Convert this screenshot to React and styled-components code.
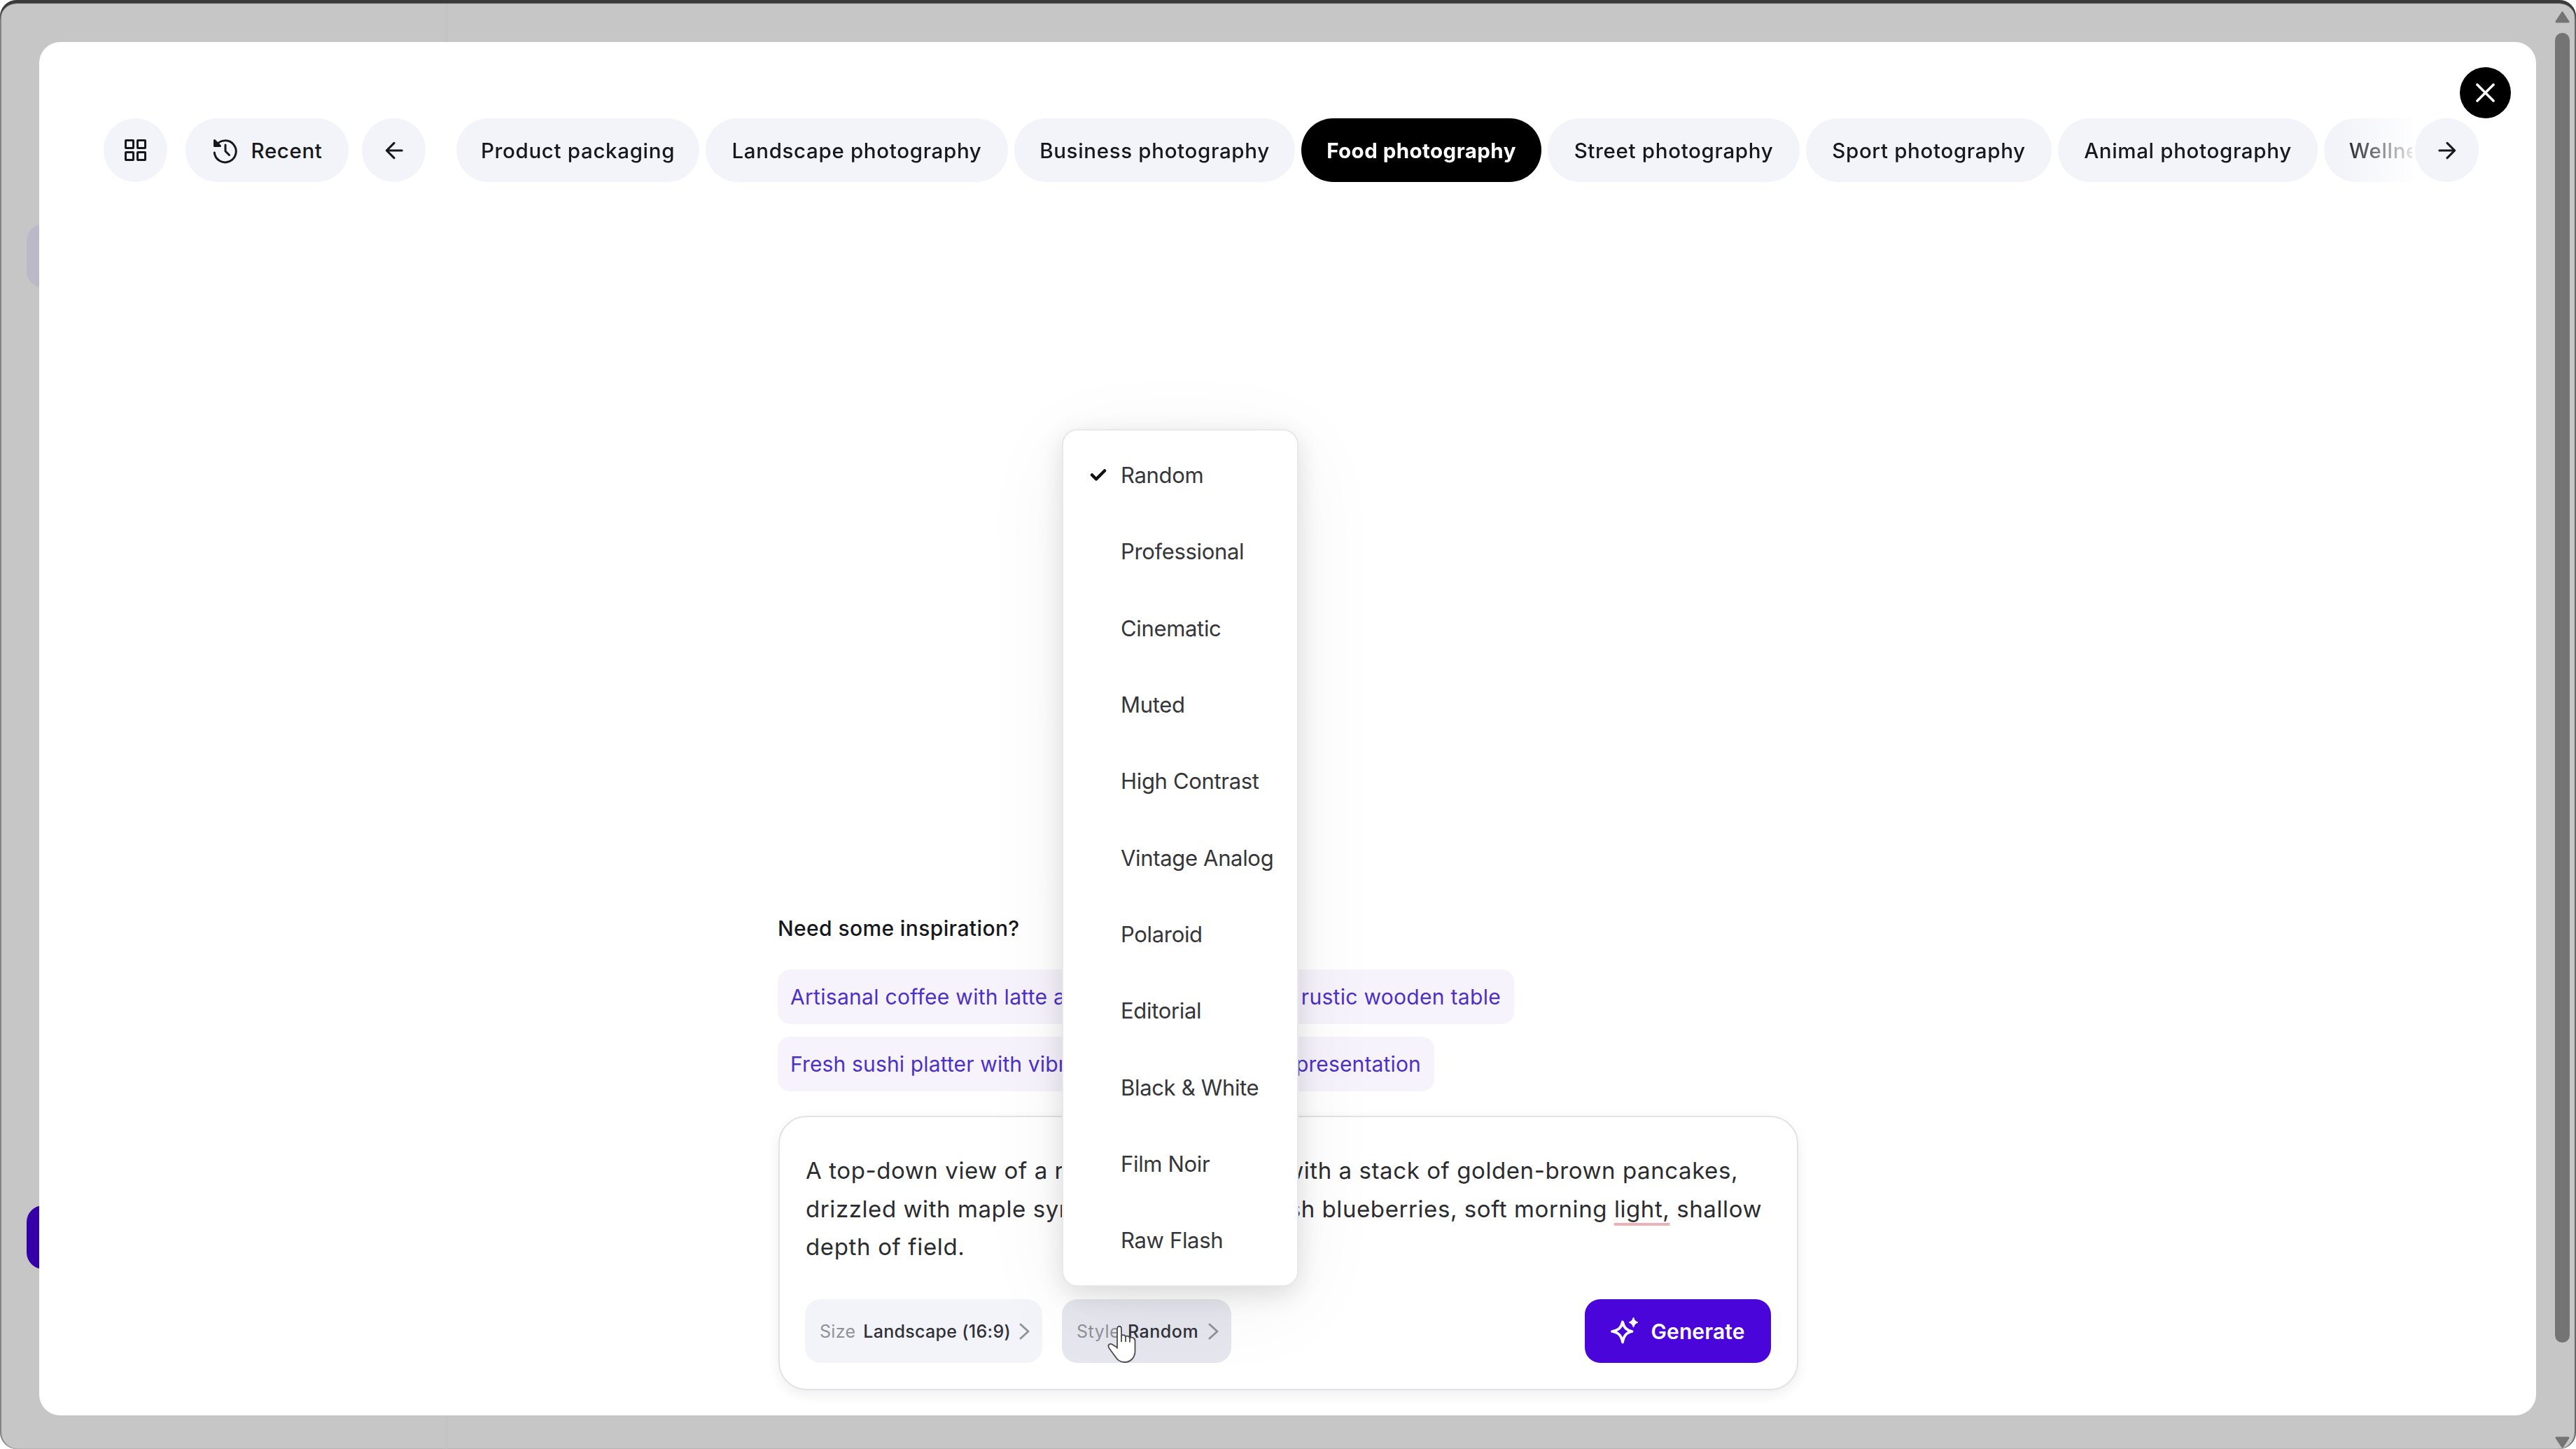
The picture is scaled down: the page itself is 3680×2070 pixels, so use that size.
import React from "react";
import styled, { createGlobalStyle, css } from "styled-components";

const GlobalStyle = createGlobalStyle`
  *, *::before, *::after { box-sizing: border-box; }
  html, body { margin: 0; padding: 0; background: #fff; }
  body { font-family: Inter, "Liberation Sans", sans-serif; color: #17181c; overflow: hidden; }
  button { font: inherit; color: inherit; border: 0; margin: 0; padding: 0; }
`;

const Window = styled.div`
  position: relative;
  display: flex;
  width: 3680px;
  height: 2070px;
  overflow: hidden;
  border-radius: 24px;
  background: #c6c6c6;
  box-shadow: inset 0 5px 1px #3a3a3a, inset 2px 0 1px #858585, inset -2px 0 1px #666;
`;

const Stage = styled.div`
  flex: 1;
  min-width: 0;
  display: flex;
  padding: 60px 27px 48px 56px;
`;

const SidebarEdge = styled.div`
  position: absolute;
  left: 637px;
  top: 6px;
  bottom: 0;
  width: 2px;
  background: #c2c2c2;
`;

const PageTab = styled.div`
  position: absolute;
  left: 38px;
  top: ${(p) => p.$top}px;
  width: 60px;
  height: 91px;
  border-radius: 24px;
  background: ${(p) => p.$color};
`;

const Modal = styled.main`
  position: relative;
  flex: 1;
  min-width: 0;
  display: flex;
  flex-direction: column;
  justify-content: space-between;
  border-radius: 30px;
  background: #fff;
  padding: 109px 82px 36px 92px;
`;

const ScrollTrack = styled.div`
  width: 30px;
  flex: none;
  display: flex;
  flex-direction: column;
  align-items: flex-start;
  padding: 16px 9px 0 0;
`;

const ScrollThumb = styled.div`
  width: 21px;
  height: 1871px;
  margin: 14px 0 134px;
  flex: none;
  border-radius: 11px;
  background: #747474;
`;

const Close = styled.button`
  position: absolute;
  top: 36px;
  right: 36px;
  width: 73px;
  height: 73px;
  border-radius: 50%;
  background: #000;
  display: grid;
  place-items: center;
`;

const TopBar = styled.nav`
  display: flex;
  height: 91px;
`;

const pill = css`
  height: 91px;
  flex: none;
  display: flex;
  align-items: center;
  justify-content: center;
  border-radius: 46px;
  background: #f3f4f9;
  white-space: nowrap;
  font-size: 29.5px;
  font-weight: 500;
  letter-spacing: ${(p) => p.$spacing || 0}px;
`;

const RoundButton = styled.button`
  ${pill}
  width: 91px;
`;

const RecentButton = styled.button`
  ${pill}
  width: 233px;
  gap: 19px;
  margin: 0 19px 0 26px;
`;

const Categories = styled.div`
  display: flex;
  gap: 9px;
  flex: 1;
  min-width: 0;
  overflow: hidden;
  margin: 0 4px 0 44px;
  mask-image: linear-gradient(to right, #000 calc(100% - 100px), rgba(0, 0, 0, 0.12) 100%);
`;

const Category = styled.button`
  ${pill}
  width: ${(p) => p.$width}px;
  ${(p) =>
    p.$active &&
    css`
      background: #000;
      color: #fff;
      font-weight: 700;
    `}
`;

const Composer = styled.section`
  width: 1457px;
  margin-left: 964px;
  display: flex;
  flex-direction: column;
`;

const Heading = styled.h2`
  margin: 0 0 38px -1px;
  font-size: 30px;
  line-height: 42px;
  font-weight: 500;
  letter-spacing: ${(p) => p.$spacing}px;
`;

const Suggestion = styled.div`
  width: ${(p) => p.$width}px;
  height: 78px;
  margin: 0 0 17.5px -1px;
  padding: 0 19px 0 18px;
  display: flex;
  align-items: center;
  justify-content: space-between;
  border-radius: 18px;
  background: #f6f3fd;
  color: #4d30c6;
  font-size: 30px;
  white-space: nowrap;
  letter-spacing: ${(p) => p.$spacing}px;
`;

const PromptCard = styled.div`
  height: 392px;
  margin-top: 18px;
  padding: 49px 37px 37px 36px;
  display: flex;
  flex-direction: column;
  justify-content: space-between;
  border: 2px solid #e3e3e6;
  border-radius: 40px;
  background: #fff;
  box-shadow: 0 6px 18px rgba(20, 20, 40, 0.07);
`;

const Prompt = styled.div`
  margin-left: 1px;
  font-size: 33px;
  line-height: 54.6px;
  color: #2b2c30;
`;

const PromptLine = styled.div`
  display: flex;
  justify-content: space-between;
  width: ${(p) => p.$width}px;
  white-space: pre;
  letter-spacing: ${(p) => p.$spacing}px;
`;

const Misspelled = styled.span`
  text-decoration: underline #eeb0b5 4px;
  text-underline-offset: 8px;
  text-decoration-skip-ink: none;
`;

const Actions = styled.div`
  display: flex;
  align-items: center;
  height: 91px;
`;

const OptionButton = styled.button`
  width: ${(p) => p.$width}px;
  height: 91px;
  margin-right: 28px;
  padding: 0 18px 0 21px;
  display: flex;
  align-items: center;
  border-radius: 22px;
  background: ${(p) => (p.$open ? "#e6e7ee" : "#f3f4f9")};
  font-size: 25px;
  font-weight: 500;
  white-space: nowrap;
  color: #303137;
  letter-spacing: ${(p) => p.$spacing}px;
  svg { margin-left: auto; }
`;

const OptionLabel = styled.span`
  color: #909198;
  font-weight: 400;
  margin-right: 11px;
`;

const GenerateButton = styled.button`
  width: 266px;
  height: 91px;
  margin-left: auto;
  display: flex;
  align-items: center;
  justify-content: center;
  gap: 18px;
  padding-right: 2px;
  border-radius: 22px;
  background: #4a05da;
  color: #fff;
  font-size: 30px;
  font-weight: 600;
  letter-spacing: ${(p) => p.$spacing}px;
`;

const Menu = styled.ul`
  position: absolute;
  left: 1461px;
  top: 553px;
  width: 338px;
  height: 1225px;
  margin: 0;
  padding: 9px 0 0;
  list-style: none;
  border: 2px solid #e8e8ea;
  border-radius: 22px;
  background: #fff;
  box-shadow: 0 10px 36px rgba(0, 0, 0, 0.12), 0 24px 130px rgba(0, 0, 0, 0.055);
`;

const MenuItem = styled.li`
  height: 109.3px;
  display: flex;
  align-items: center;
  font-size: 31px;
  color: #35363a;
  white-space: nowrap;
  letter-spacing: ${(p) => p.$spacing}px;
`;

const CheckSlot = styled.span`
  width: 82px;
  padding-left: 38px;
  display: flex;
  flex: none;
`;

const Pointer = styled.svg`
  position: absolute;
  left: 1526px;
  top: 1833px;
`;

const Stroke = ({ w, h, box, width = 3, color = "currentColor", children }) => (
  <svg width={w} height={h} viewBox={box} fill="none" stroke={color} strokeWidth={width} strokeLinecap="round" strokeLinejoin="round">
    {children}
  </svg>
);

const GridIcon = () => (
  <Stroke w={34} h={34} box="0 0 34 34">
    {[2.5, 19.5].map((x) => [2.5, 19.5].map((y) => <rect key={x + "-" + y} x={x} y={y} width="11" height="11" rx="0.5" />))}
  </Stroke>
);

const HistoryIcon = () => (
  <Stroke w={37} h={38} box="0 0 37 38">
    <path d="M3.500 4.500v8h8z" fill="currentColor" />
    <path d="M6 11.500A15.500 15.500 0 1 1 3.300 22" />
    <path d="M19 11v9l5.500 5.500" />
  </Stroke>
);

const ArrowIcon = ({ flip }) => (
  <Stroke w={26} h={26} box="0 0 28 28" width={3.4}>
    <path d={flip ? "M2 14h23M14 2.500l11.500 11.500L14 25.500" : "M26 14H3M14 2.500L2.500 14L14 25.500"} />
  </Stroke>
);

const ChevronIcon = () => (
  <Stroke w={15} h={24} box="0 0 15 24" color="#92939a">
    <path d="M2 2l11 10L2 22" />
  </Stroke>
);

const SparkleIcon = () => (
  <Stroke w={41} h={41} box="0 0 41 41" width={3.8}>
    <path d="M18 7.500c1.900 8 5.500 11.600 13.500 13.500c-8 1.900-11.600 5.500-13.500 15.500c-1.900-10-5.500-13.600-15-15.500c9.500-1.900 13.100-5.500 15-13.500z" />
    <path d="M33.500 2c.9 4 2.300 5.300 5.500 6.200c-3.200.9-4.600 2.200-5.500 6.200c-.9-4-2.300-5.300-5.500-6.200c3.200-.9 4.600-2.200 5.500-6.200z" fill="currentColor" strokeWidth="1.800" />
  </Stroke>
);

const PointerIcon = () => (
  <Pointer width="42" height="56" viewBox="0 0 42 56" fill="#fff" stroke="#4b4b50" strokeWidth="1.800" strokeLinejoin="round">
    <path d="M14 33V5.500C14 .5 20 .5 20 5.500V15c2-1.500 5.500-1 6 1.500c2-1.500 5.500-.8 6 2c2.500-2 7.500-.5 7.500 4V37c0 10-7 16-15 16C17 53 14 49 10.500 44L2.500 33c-3-5 1-7.500 5-5L14 32z" />
    <path d="M20 15v9M26 17v7M32 18.500v6" fill="none" />
  </Pointer>
);

const ScrollArrow = ({ down }) => (
  <svg width="21" height="17" viewBox="0 0 21 17">
    <path d={down ? "M2 2h17L10.500 15z" : "M2 15h17L10.500 2z"} fill="#747474" stroke="#747474" strokeWidth="3" strokeLinejoin="round" />
  </svg>
);

const categories = [
  { name: "Product packaging", width: 347 },
  { name: "Landscape photography", width: 432 },
  { name: "Business photography", width: 401 },
  { name: "Food photography", width: 343, active: true },
  { name: "Street photography", width: 360 },
  { name: "Sport photography", width: 351 },
  { name: "Animal photography", width: 371 },
  { name: "Wellness photography", width: 400 },
];

const styles = [
  "Random",
  "Professional",
  "Cinematic",
  "Muted",
  "High Contrast",
  "Vintage Analog",
  "Polaroid",
  "Editorial",
  "Black & White",
  "Film Noir",
  "Raw Flash",
];

export default function App() {
  return (
    <>
      <GlobalStyle />
      <Window>
        <SidebarEdge />
        <PageTab $top={320} $color="#bbb9c7" />
        <PageTab $top={1722} $color="#3401a9" />
        <Stage>
          <Modal>
            <TopBar>
              <RoundButton aria-label="All categories"><GridIcon /></RoundButton>
              <RecentButton $spacing={0.6}><HistoryIcon />Recent</RecentButton>
              <RoundButton aria-label="Previous"><ArrowIcon /></RoundButton>
              <Categories>
                {categories.map((c) => (
                  <Category key={c.name} $width={c.width} $active={c.active} $spacing={c.active ? 0.45 : 0.67}>
                    {c.name}
                  </Category>
                ))}
              </Categories>
              <RoundButton aria-label="Next"><ArrowIcon flip /></RoundButton>
            </TopBar>

            <Composer>
              <Heading $spacing={0.38}>Need some inspiration?</Heading>
              <Suggestion $width={1052} $spacing={0.3}>
                <span>Artisanal coffee with latte art</span>
                <span>on a rustic wooden table</span>
              </Suggestion>
              <Suggestion $width={938} $spacing={0.15}>
                <span>Fresh sushi platter with vibrant</span>
                <span>presentation</span>
              </Suggestion>
              <PromptCard>
                <Prompt>
                  <PromptLine $width={1332} $spacing={0.58}>
                    <span>A top-down view of a rustic</span>
                    <span>with a stack of golden-brown pancakes,</span>
                  </PromptLine>
                  <PromptLine $width={1366} $spacing={0.58}>
                    <span>drizzled with maple syrup</span>
                    <span>fresh blueberries, soft morning <Misspelled>light,</Misspelled> shallow</span>
                  </PromptLine>
                  <PromptLine $width={1366} $spacing={0.65}>depth of field.</PromptLine>
                </Prompt>
                <Actions>
                  <OptionButton $width={339} $spacing={0.3}>
                    <OptionLabel>Size</OptionLabel>Landscape (16:9)<ChevronIcon />
                  </OptionButton>
                  <OptionButton $width={242} $open $spacing={0.5}>
                    <OptionLabel>Style</OptionLabel>Random<ChevronIcon />
                  </OptionButton>
                  <GenerateButton $spacing={0.1}><SparkleIcon />Generate</GenerateButton>
                </Actions>
              </PromptCard>
            </Composer>

            <Menu>
              {styles.map((s, i) => (
                <MenuItem key={s} $spacing={-0.33}>
                  <CheckSlot>
                    {i === 0 && (
                      <Stroke w={24} h={19} box="0 0 24 19" width={4.5} color="#111">
                        <path d="M3 9.500l6 6L21 3.500" />
                      </Stroke>
                    )}
                  </CheckSlot>
                  {s}
                </MenuItem>
              ))}
            </Menu>
            <PointerIcon />
            <Close aria-label="Close">
              <Stroke w={29} h={29} box="0 0 29 29" width={3.6}>
                <path d="M3 3l23 23M26 3L3 26" stroke="#fff" />
              </Stroke>
            </Close>
          </Modal>
        </Stage>
        <ScrollTrack>
          <ScrollArrow />
          <ScrollThumb />
          <ScrollArrow down />
        </ScrollTrack>
      </Window>
    </>
  );
}
